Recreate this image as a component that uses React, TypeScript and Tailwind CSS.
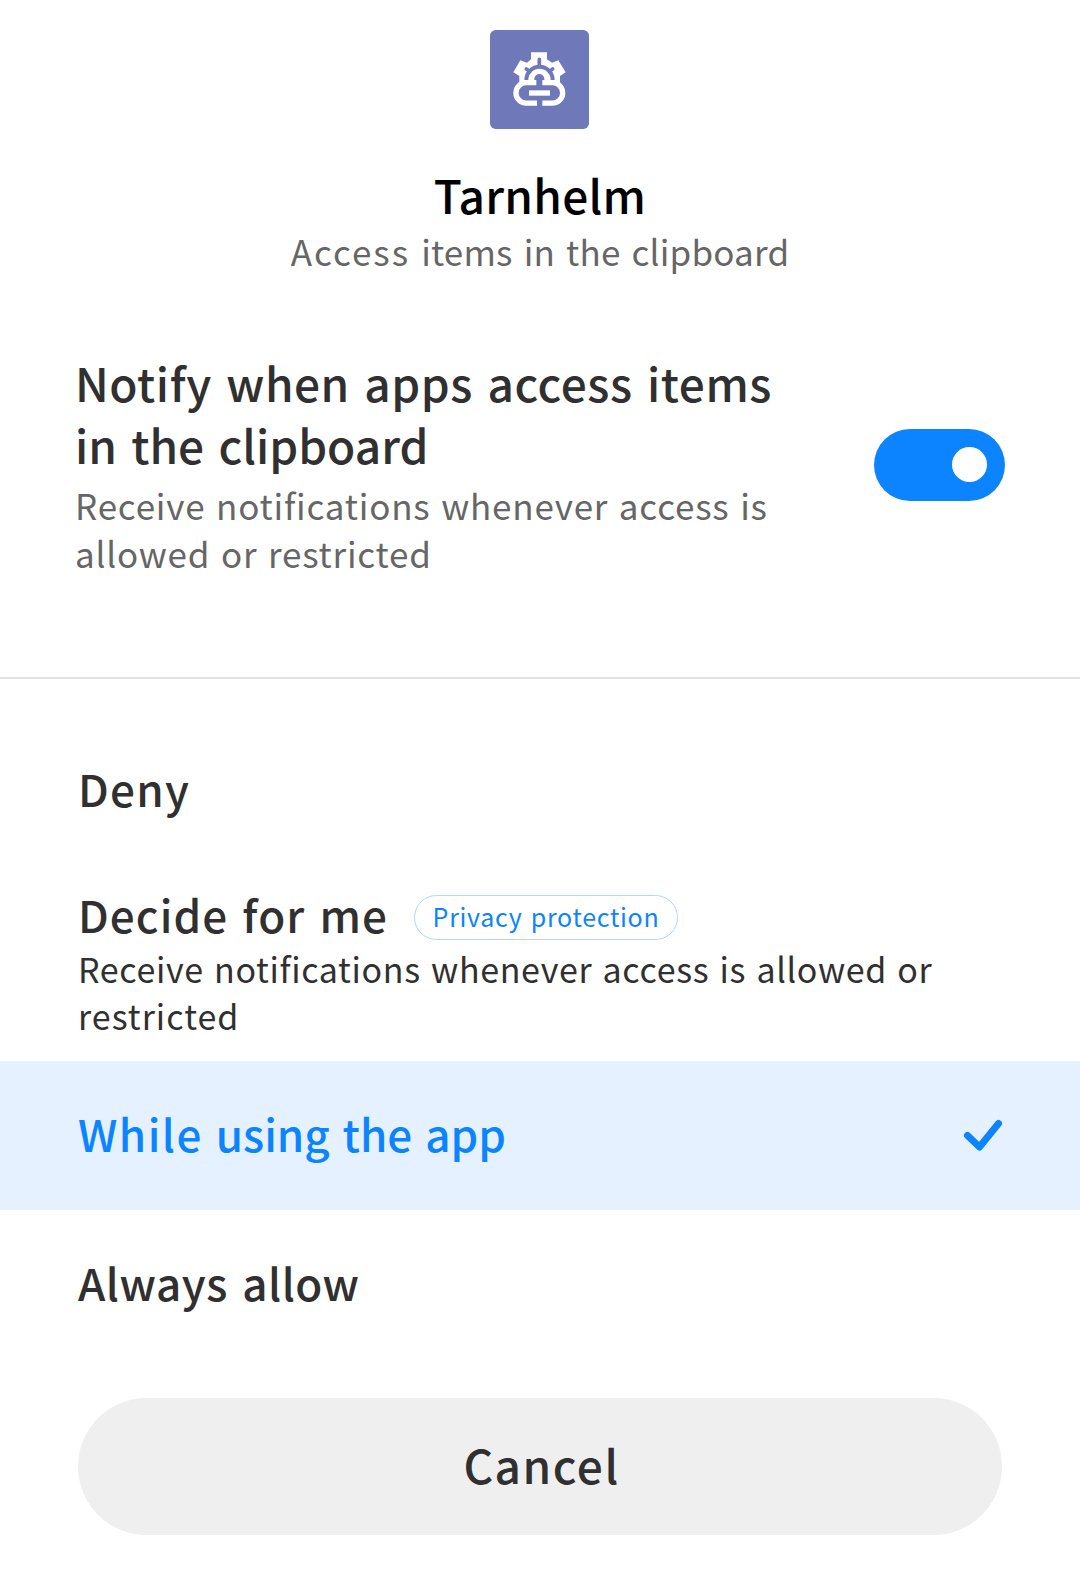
const TITLE = "text-[46px] leading-[62px] font-medium";
const OPTION = "text-[44px] leading-[60px] font-medium";

function AppIcon() {
  return (
    <svg viewBox="30 30 297 297" className="mr-px size-[99px]" aria-hidden="true">
      <rect x="30" y="30" width="297" height="297" rx="17" fill="#6f79b9" />
      <path d="M153 97H201V118L216 128L235 121L257 157L240 168V190H118V168L100 157L121 121L141 128L153 118Z" fill="#fff" />
      <g fill="none" stroke="#6f79b9" strokeWidth="12" strokeLinecap="round">
        <path d="M139 180A39.500 39.500 0 0 1 218 180" strokeLinecap="butt" />
        <path d="M178 118V138M139 147L149 154M218 147L208 154" strokeWidth="11" />
      </g>
      <rect x="108" y="188" width="140" height="61.500" rx="30.700" fill="#6f79b9" stroke="#fff" strokeWidth="16" />
      <path d="M163 180V177A15 15 0 0 1 193 177V180H187V198H169V180ZM171 238H187V260H171Z" fill="#6f79b9" />
      <path d="M147 219H210" stroke="#fff" strokeWidth="16" />
    </svg>
  );
}

function CheckIcon() {
  return (
    <svg viewBox="0 0 40 34" className="mt-[2px] h-[34px] w-10" fill="none" stroke="#0d84ff" strokeWidth="7" strokeLinecap="round" strokeLinejoin="round" aria-hidden="true">
      <path d="M4.500 18.500L16.500 30L35.500 6.500" />
    </svg>
  );
}

export default function App() {
  return (
    <main className="flex h-[1571px] w-[1080px] flex-col overflow-hidden bg-white font-['Noto_Sans_CJK_SC',sans-serif] whitespace-nowrap text-[#303030]">
      <header className="flex flex-col items-center pt-[30px]">
        <AppIcon />
        <h1 className={`mt-[34px] tracking-[0.3px] text-black ${TITLE}`}>Tarnhelm</h1>
        <p className="mt-0.5 text-[35px] leading-[48px] text-[#666]">
          <span className="mr-[11px] tracking-[2px]">Access</span>
          <span className="tracking-[0.2px] [word-spacing:3px]">items in the clipboard</span>
        </p>
      </header>

      <section className="mt-[76px] flex items-center justify-between border-b-2 border-[#e3e3e3] pr-[75px] pb-[100px] pl-[75px]">
        <div>
          <h2 className={TITLE}>
            <span className="block tracking-[0.55px] [word-spacing:3.6px]">Notify when apps access items</span>
            <span className="block [word-spacing:4px]">in the clipboard</span>
          </h2>
          <p className="mt-1.5 text-[35px] leading-[48px] tracking-[0.8px] text-[#666] [word-spacing:2px]">Receive notifications whenever access is<br />allowed or restricted</p>
        </div>
        <button role="switch" aria-checked="true" aria-label="Notify" className="mt-[2px] flex h-[72px] w-[131px] items-center justify-end rounded-full bg-[#0d84ff] pr-[18px] pb-px">
          <span className="size-[35px] rounded-full bg-white" />
        </button>
      </section>

      <section className="flex flex-col pt-[79px]">
        <div className={`pl-[78px] tracking-[1.3px] ${OPTION}`}>Deny</div>
        <div className="mt-[66px] mb-[22px] pl-[78px]">
          <div className="flex items-center">
            <span className={`w-[309px] tracking-[1.1px] [word-spacing:3px] ${OPTION}`}>Decide for me</span>
            <span className="mt-[6px] ml-[27px] flex h-[45px] w-[264px] items-center justify-center rounded-full border border-[#b5d6fb] text-[25px] tracking-[0.7px] text-[#0d84ff] [word-spacing:2px]">Privacy protection</span>
          </div>
          <p className="mt-px text-[34px] leading-[47px]">
            <span className="block tracking-[0.65px] [word-spacing:2px]">Receive notifications whenever access is allowed or</span>
            <span className="block tracking-[1px]">restricted</span>
          </p>
        </div>
        <div className="flex h-[149px] items-center justify-between bg-[#e5f1ff] pr-[77px] pb-[5px] pl-[78px] text-[#0d84ff]">
          <span className={`[word-spacing:3px] ${OPTION}`}>
            <span className="tracking-[1.5px]">While</span> using the app
          </span>
          <CheckIcon />
        </div>
        <div className="flex h-[149px] items-center pb-[5px] pl-[78px]">
          <span className={`tracking-[0.5px] [word-spacing:4px] ${OPTION}`}>Always allow</span>
        </div>
      </section>

      <button className={`mt-[39px] ml-[78px] h-[137px] w-[924px] rounded-full bg-[#efefef] pb-[5px] pl-[3px] tracking-[1.5px] ${TITLE}`}>Cancel</button>
    </main>
  );
}
